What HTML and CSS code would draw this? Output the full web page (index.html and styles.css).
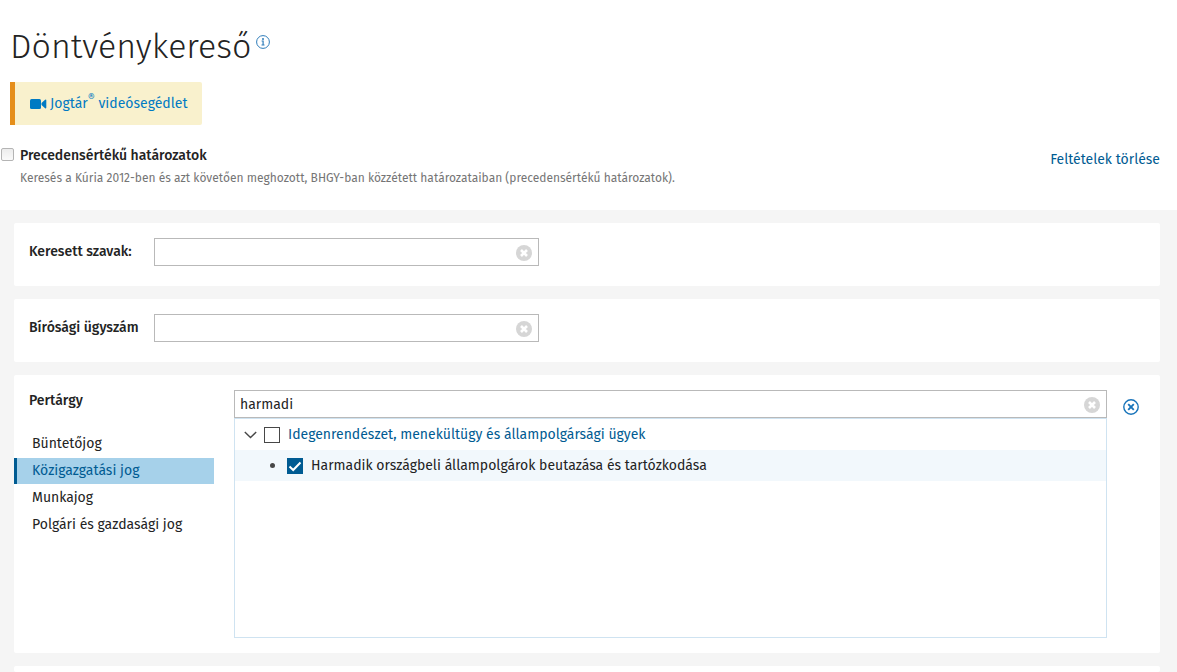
FILE: index.html
```html
<!DOCTYPE html>
<html lang="hu">
<head>
    <meta charset="UTF-8">
    <meta name="viewport" content="width=device-width, initial-scale=1.0">
    <title>Döntvénykereső</title>
    <link rel="stylesheet" href="styles.css">
</head>
<body>
    <header class="head">
        <div class="title">
            <h1>Döntvénykereső</h1>
            <button type="button" class="icon_btn info" aria-label="Információ">
                <svg width="14" height="14" viewBox="0 0 14 14">
                    <circle cx="7" cy="7" r="6.4" fill="none" stroke="#2f7dba" stroke-width="1"/>
                    <circle cx="7" cy="3.9" r="1" fill="#2f7dba"/>
                    <path d="M5.600 6h1.500v4M5.500 10h3" fill="none" stroke="#2f7dba" stroke-width="1.200"/>
                </svg>
            </button>
        </div>
        <a class="video" href="#">
            <svg width="17" height="12" viewBox="0 0 17 12">
                <rect x="0" y="1" width="11" height="10" rx="1.5" fill="#007ac3"/>
                <path d="M11.5 5l3.6-3.2q1.2-.6 1.2.6v7.2q0 1.200-1.200.6L11.500 7z" fill="#007ac3"/>
            </svg>
            <span>Jogtár<sup>®</sup> videósegédlet</span>
        </a>
        <div class="precedent">
            <input type="checkbox" id="precedent" class="check_small">
            <div class="precedent_text">
                <label for="precedent">Precedensértékű határozatok</label>
                <p>Keresés a Kúria 2012-ben és azt követően meghozott, BHGY-ban közzétett határozataiban (precedensértékű határozatok).</p>
            </div>
            <a class="reset" href="#">Feltételek törlése</a>
        </div>
    </header>

    <main class="form">
        <section class="card row">
            <label class="name" for="words">Keresett szavak:</label>
            <div class="field">
                <input type="text" id="words">
                <button type="button" class="icon_btn clear" aria-label="Törlés">
                    <svg width="16" height="16" viewBox="0 0 16 16">
                        <circle cx="8" cy="8" r="8" fill="#d6d6d6"/>
                        <path d="M5 5l6 6M11 5l-6 6" stroke="#fff" stroke-width="2.600"/>
                    </svg>
                </button>
            </div>
        </section>

        <section class="card row">
            <label class="name" for="number">Bírósági ügyszám</label>
            <div class="field">
                <input type="text" id="number">
                <button type="button" class="icon_btn clear" aria-label="Törlés">
                    <svg width="16" height="16" viewBox="0 0 16 16">
                        <circle cx="8" cy="8" r="8" fill="#d6d6d6"/>
                        <path d="M5 5l6 6M11 5l-6 6" stroke="#fff" stroke-width="2.600"/>
                    </svg>
                </button>
            </div>
        </section>

        <section class="card subject">
            <div class="side">
                <label class="name" for="subject">Pertárgy</label>
                <ul class="tabs">
                    <li><a href="#">Büntetőjog</a></li>
                    <li><a href="#" class="active">Közigazgatási jog</a></li>
                    <li><a href="#">Munkajog</a></li>
                    <li><a href="#">Polgári és gazdasági jog</a></li>
                </ul>
            </div>
            <div class="picker">
                <div class="field">
                    <input type="text" id="subject" value="harmadi">
                    <button type="button" class="icon_btn clear" aria-label="Törlés">
                        <svg width="16" height="16" viewBox="0 0 16 16">
                            <circle cx="8" cy="8" r="8" fill="#d6d6d6"/>
                            <path d="M5 5l6 6M11 5l-6 6" stroke="#fff" stroke-width="2.600"/>
                        </svg>
                    </button>
                </div>
                <ul class="tree">
                    <li class="node">
                        <button type="button" class="icon_btn toggle" aria-label="Összecsukás">
                            <svg width="13" height="8" viewBox="0 0 13 8">
                                <path d="M.8 1l5.700 5.600L12.200 1" fill="none" stroke="#474747" stroke-width="1.400"/>
                            </svg>
                        </button>
                        <input type="checkbox" id="node1" class="check">
                        <label for="node1" class="group">Idegenrendészet, menekültügy és állampolgársági ügyek</label>
                    </li>
                    <li class="node leaf">
                        <span class="dot"></span>
                        <input type="checkbox" id="node2" class="check" checked>
                        <label for="node2">Harmadik országbeli állampolgárok beutazása és tartózkodása</label>
                    </li>
                </ul>
            </div>
            <button type="button" class="icon_btn remove" aria-label="Feltétel eltávolítása">
                <svg width="16" height="16" viewBox="0 0 16 16">
                    <circle cx="8" cy="8" r="7.200" fill="none" stroke="#1874ba" stroke-width="1.400"/>
                    <path d="M5.200 5.200l5.600 5.600M10.800 5.200l-5.600 5.600" stroke="#1874ba" stroke-width="1.900"/>
                </svg>
            </button>
        </section>

        <section class="card next"></section>
    </main>
</body>
</html>
```
FILE: styles.css
```css
*{
    margin: 0;
    padding: 0;
    box-sizing: border-box;
}
body{
    display: flex;
    flex-direction: column;
    min-height: 100vh;
    background: #fff;
    color: #232323;
    font-family: "Fira Sans", "Noto Sans", sans-serif;
    font-size: 14px;
    line-height: 22px;
}
a{
    color: #005b92;
    text-decoration: none;
}
ul{
    list-style: none;
}
svg{
    display: block;
}
.icon_btn{
    border: 0;
    background: none;
    cursor: pointer;
}

/* header */
.head{
    padding: 24px 17px 21px 0;
}
.title{
    display: flex;
    align-items: flex-start;
    gap: 5px;
    padding-left: 10px;
}
.title h1{
    font-size: 34px;
    font-weight: 300;
    line-height: 46px;
}
.info{
    margin-top: 11px;
}
.video{
    display: inline-flex;
    align-items: center;
    gap: 3px;
    height: 43px;
    margin: 12px 0 0 10px;
    padding: 0 15px;
    border-left: 5px solid #e58e1a;
    border-radius: 0 2px 2px 0;
    background: #f9f1cd;
    color: #007ac3;
    vertical-align: top;
}
.video sup{
    font-size: 11px;
    line-height: 0;
    vertical-align: 7px;
}
.precedent{
    display: flex;
    align-items: flex-start;
    margin-top: 20px;
}
.check_small{
    appearance: none;
    flex: none;
    width: 13px;
    height: 13px;
    margin: 3px 6px 0 1px;
    border: 1px solid #b4b4b4;
    border-radius: 2px;
    background: linear-gradient(#ececec, #fafafa);
}
.precedent_text{
    flex: 1;
}
.precedent_text label{
    display: block;
    font-weight: 500;
}
.precedent_text p{
    color: #757575;
    font-size: 12px;
}
.reset{
    margin-top: 4px;
}

/* search form */
.form{
    flex: 1;
    display: flex;
    flex-direction: column;
    gap: 13px;
    padding: 13px 17px 0 14px;
    background: #f5f5f5;
}
.card{
    border-radius: 2px;
    background: #fff;
}
.name{
    font-weight: 500;
}
.row{
    display: flex;
    align-items: flex-start;
    padding: 15px 15px 20px;
}
.row .name{
    width: 125px;
    padding-top: 3px;
}
.row .field{
    width: 385px;
}
.field{
    position: relative;
}
.field input{
    display: block;
    width: 100%;
    height: 28px;
    padding: 0 30px 0 5px;
    border: 1px solid #b9b9b9;
    background: #fff;
    color: #232323;
    font: inherit;
}
.clear{
    position: absolute;
    top: 7px;
    right: 7px;
}
.subject{
    display: flex;
    align-items: flex-start;
    padding: 15px 21px 15px 0;
}
.side{
    width: 200px;
    margin-right: 20px;
}
.side .name{
    display: block;
    padding-left: 15px;
}
.tabs{
    display: grid;
    gap: 1px;
    margin-top: 19px;
}
.tabs a{
    display: block;
    padding-left: 15px;
    border-left: 3px solid transparent;
    color: #232323;
    line-height: 26px;
}
.tabs .active{
    border-color: #005b92;
    background: #a6d1ea;
    color: #005b92;
}
.picker{
    flex: 1;
}
.tree{
    height: 220px;
    border: 1px solid #cfe3f1;
}
.node{
    display: flex;
    align-items: center;
    height: 31px;
    padding-left: 9px;
}
.leaf{
    padding-left: 35px;
    background: #f2f8fc;
}
.toggle{
    margin-right: 7px;
}
.dot{
    width: 5px;
    height: 5px;
    margin-right: 12px;
    border-radius: 50%;
    background: #474747;
}
.check{
    appearance: none;
    width: 16px;
    height: 16px;
    margin-right: 8px;
    border: 1px solid #474747;
    background: #fff;
}
.check:checked{
    border-color: #005b92;
    background: #005b92 url("data:image/svg+xml,%3Csvg xmlns='http://www.w3.org/2000/svg' viewBox='0 0 14 14'%3E%3Cpath d='M1.500 7.500l3.700 3.500L12.500 3.500' fill='none' stroke='%23fff' stroke-width='2'/%3E%3C/svg%3E") center / 14px no-repeat;
}
.group{
    color: #005b92;
}
.remove{
    margin: 9px 0 0 16px;
}
.next{
    flex: 1;
}
```
